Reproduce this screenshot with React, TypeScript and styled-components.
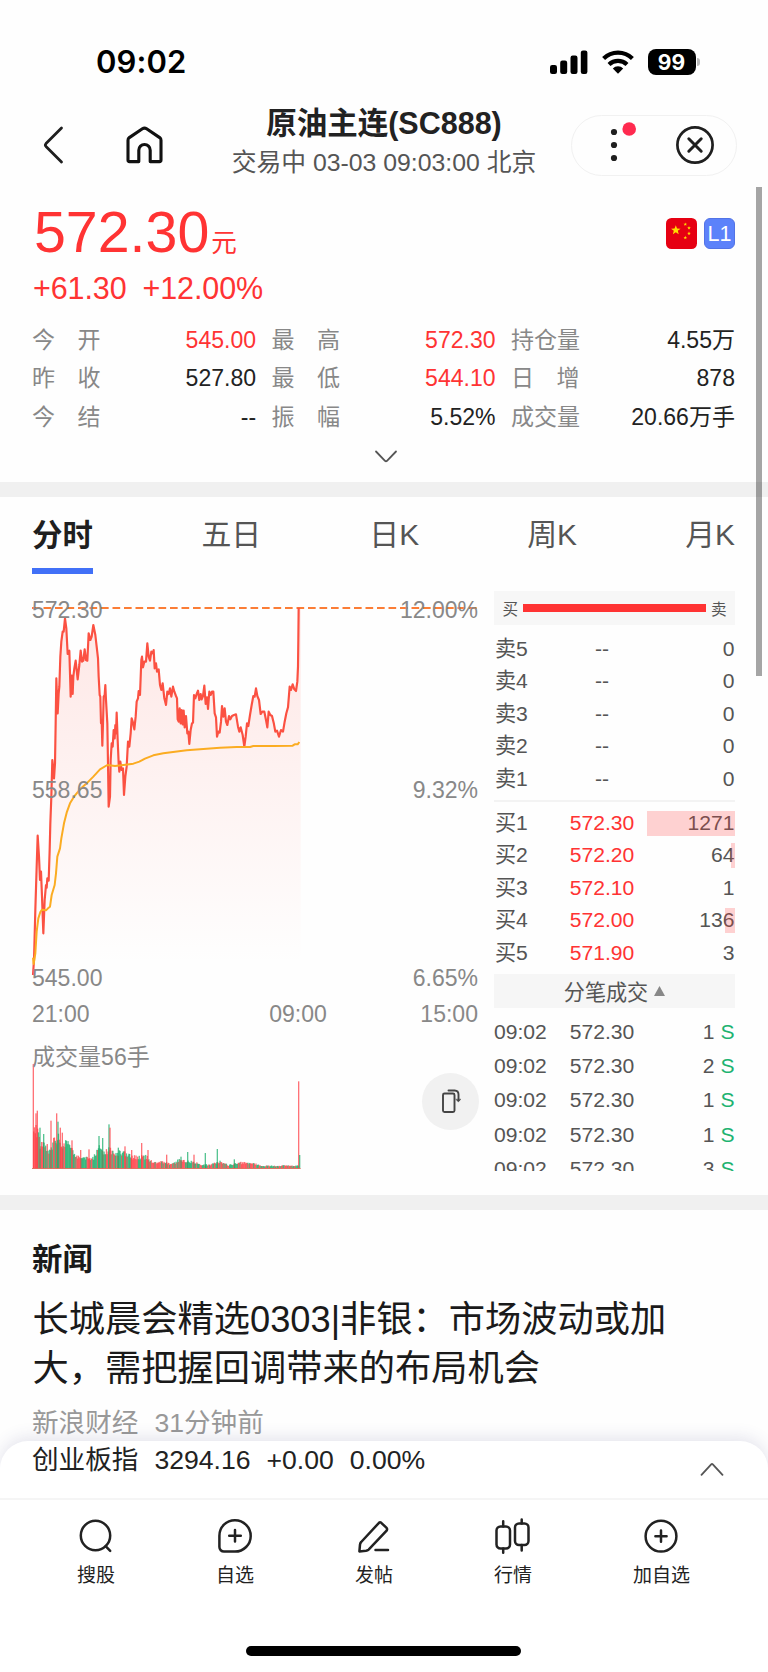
import React from "react";
import styled, { createGlobalStyle } from "styled-components";

const GlobalStyle = createGlobalStyle`
  * { box-sizing: border-box; }
  body {
    margin: 0;
    background: #fff;
    font-family: "Liberation Sans", "Noto Sans CJK SC", sans-serif;
    color: #222;
  }
  svg { display: block; }
`;

const RED = "#ff3333";
const GREEN = "#1db371";

const Screen = styled.div`
  position: relative;
  display: flex;
  flex-direction: column;
  width: 768px;
  height: 1672px;
  overflow: hidden;
  background: #fefefe;
`;

/* ---------- status bar ---------- */
const StatusBar = styled.div`
  flex: none;
  display: flex;
  justify-content: space-between;
  align-items: center;
  height: 102px;
  padding: 22px 68px 0 96px;
`;
const Clock = styled.div`
  font: 600 31px/40px Inter, sans-serif;
  color: #000;
  letter-spacing: 0.1px;
`;
const StatusIcons = styled.div`
  display: flex;
  align-items: center;
`;
const Battery = styled.div`
  width: 48px;
  height: 26.5px;
  margin-left: 14px;
  border-radius: 8px;
  background: #000;
  color: #fff;
  font: 700 21px/27px Inter, sans-serif;
  text-align: center;
`;
const BatteryNub = styled.div`
  width: 3px;
  height: 8px;
  margin-left: 1.5px;
  border-radius: 0 3px 3px 0;
  background: #b9b9b9;
`;

/* ---------- header ---------- */
const Header = styled.header`
  flex: none;
  display: grid;
  grid-template-columns: 1fr auto 1fr;
  align-items: center;
  height: 86px;
`;
const HeaderLeft = styled.div`
  display: flex;
  align-items: center;
  gap: 62px;
  padding-left: 42px;
`;
const TitleBlock = styled.div`
  text-align: center;
  margin-top: -5px;
`;
const Title = styled.h1`
  margin: 0;
  font-size: 30.5px;
  font-weight: 700;
  line-height: 40px;
`;
const Subtitle = styled.div`
  font-size: 24.8px;
  line-height: 39px;
  color: #555;
`;
const Capsule = styled.div`
  justify-self: end;
  display: flex;
  align-items: center;
  justify-content: space-between;
  width: 166px;
  height: 61px;
  margin-right: 31px;
  padding: 0 21px 0 37.5px;
  border: 1.5px solid #f1f1f1;
  border-radius: 31px;
`;

/* ---------- quote ---------- */
const Quote = styled.section`
  flex: none;
  height: 294px;
  padding: 12px 33px 0 32px;
`;
const PriceRow = styled.div`
  display: flex;
  justify-content: space-between;
  align-items: center;
  height: 66px;
`;
const Price = styled.div`
  padding: 9px 0 0 2px;
  font-size: 57.3px;
  line-height: 66px;
  color: ${RED};
`;
const Unit = styled.span`
  margin-left: 2px;
  font-size: 25.6px;
`;
const Badges = styled.div`
  display: flex;
  gap: 7px;
`;
const LevelBadge = styled.div`
  width: 31px;
  height: 31px;
  border: 1px solid #5273e6;
  border-radius: 6px;
  background: #5c82fa;
  color: #fff;
  font-size: 21.5px;
  line-height: 31px;
  text-align: center;
`;
const ChangeRow = styled.div`
  display: flex;
  gap: 16px;
  padding-left: 1px;
  font-size: 30.5px;
  line-height: 45px;
  letter-spacing: -0.1px;
  color: ${RED};
`;
const Stats = styled.div`
  display: grid;
  grid-template-columns: repeat(3, 1fr);
  column-gap: 15.4px;
  margin-top: 10px;
`;
const Stat = styled.div`
  display: flex;
  justify-content: space-between;
  font-size: 23.04px;
  line-height: 38.4px;
`;
const StatLabel = styled.span`
  display: flex;
  justify-content: space-between;
  width: 68.5px;
  color: #888;
`;
const StatValue = styled.span<{ $up?: boolean }>`
  color: ${(p) => (p.$up ? RED : "#222")};
`;
const ExpandRow = styled.div`
  display: flex;
  justify-content: center;
  padding: 14px 0 0 5px;
`;
const Band = styled.div`
  flex: none;
  height: 15px;
  background: #f0f0f0;
`;

/* ---------- tabs ---------- */
const Tabs = styled.nav`
  flex: none;
  display: flex;
  justify-content: space-between;
  height: 77px;
  padding: 4px 33px 0 32px;
`;
const Tab = styled.div<{ $active?: boolean }>`
  height: 73px;
  min-width: ${(p) => (p.$active ? "61.4px" : "0")};
  font-size: ${(p) => (p.$active ? 30.4 : 29.9)}px;
  line-height: 68px;
  font-weight: ${(p) => (p.$active ? 700 : 400)};
  color: ${(p) => (p.$active ? "#1f1f1f" : "#555")};
  border-bottom: 6px solid ${(p) => (p.$active ? "#4170f7" : "transparent")};
`;

/* ---------- chart + order book ---------- */
const Market = styled.section`
  flex: none;
  display: flex;
  justify-content: space-between;
  height: 621px;
  padding: 16px 33px 24px 32px;
`;
const ChartColumn = styled.div`
  width: 446px;
  font-size: 23.04px;
  line-height: 26px;
  color: #888;
`;
const PricePlot = styled.div`
  position: relative;
  height: 411px;
`;
const AxisLabel = styled.div<{ $top: number }>`
  position: absolute;
  left: 0;
  right: 0;
  top: ${(p) => p.$top}px;
  display: flex;
  justify-content: space-between;
`;
const TimeAxis = styled.div`
  display: flex;
  justify-content: space-between;
  height: 39px;
`;
const MiddleTime = styled.span`
  margin-left: 86px;
`;
const VolumePlot = styled.div`
  position: relative;
  height: 129px;
`;
const VolumeLabel = styled.div`
  position: absolute;
  top: 4px;
  left: 0;
`;
const RotateButton = styled.div`
  position: absolute;
  top: 33px;
  right: -1px;
  display: flex;
  align-items: center;
  justify-content: center;
  width: 57px;
  height: 57px;
  border-radius: 50%;
  background: #f1f1f1;
`;

const Book = styled.div`
  width: 241px;
  height: 580px;
  margin-top: 1px;
  overflow: hidden;
  font-size: 21.12px;
  color: #555;
`;
const RatioBar = styled.div`
  display: flex;
  align-items: center;
  gap: 4.5px;
  height: 34px;
  padding: 0 8.5px;
  margin-bottom: 7.5px;
  background: #f7f7f7;
  font-size: 15.6px;
`;
const RatioFill = styled.div`
  flex: 1;
  height: 8px;
  background: ${RED};
`;
const BookRow = styled.div`
  position: relative;
  display: grid;
  grid-template-columns: 70px 76px 1fr;
  line-height: 32.5px;
`;
const Level = styled.span`
  padding-left: 1px;
`;
const BookPrice = styled.span<{ $up?: boolean }>`
  text-align: center;
  color: ${(p) => (p.$up ? RED : "#555")};
`;
const Amount = styled.span`
  padding-right: 0.5px;
  text-align: right;
`;
const Depth = styled.div`
  position: absolute;
  right: 0;
  top: 4px;
  height: 25px;
  background: rgba(255, 60, 60, 0.23);
`;
const BookDivider = styled.div`
  height: 2px;
  margin: 4.5px 0 5px;
  background: #f3f3f3;
`;
const TradesHeader = styled.div`
  display: flex;
  align-items: center;
  justify-content: center;
  gap: 6px;
  height: 34px;
  margin: 4.5px 0 7px;
  background: #f6f6f6;
`;
const TradeRow = styled(BookRow)`
  line-height: 34.4px;
`;
const Side = styled.span`
  margin-left: 6px;
  color: ${GREEN};
`;

/* ---------- news ---------- */
const News = styled.section`
  flex: 1;
  min-height: 0;
  overflow: hidden;
  padding: 28px 33px 0 32px;
`;
const NewsHeading = styled.h2`
  margin: 0 0 14.5px;
  font-size: 30.4px;
  line-height: 42px;
  color: #1a1a1a;
`;
const Headline = styled.div`
  padding-left: 0.5px;
  font-size: 36.25px;
  line-height: 49.9px;
  color: #1a1a1a;
`;
const Meta = styled.div`
  display: flex;
  gap: 16px;
  margin-top: 9px;
  font-size: 26.6px;
  line-height: 40px;
  color: #999;
`;

/* ---------- bottom sheet ---------- */
const Sheet = styled.footer`
  position: relative;
  flex: none;
  height: 231px;
  border-radius: 28px 28px 0 0;
  background: #fff;
  box-shadow: 0 -4px 16px rgba(60, 60, 120, 0.13);
`;
const IndexRow = styled.div`
  display: flex;
  justify-content: space-between;
  height: 59px;
  padding: 0 44px 0 32px;
  border-bottom: 2px solid #f5f5f5;
`;
const IndexText = styled.div`
  display: flex;
  gap: 16px;
  font-size: 26.6px;
  line-height: 39px;
`;
const Actions = styled.div`
  display: flex;
  justify-content: space-between;
  padding: 18px 78px 0 77px;
`;
const Action = styled.div`
  display: flex;
  flex-direction: column;
  align-items: center;
  gap: 8px;
  font-size: 19px;
  line-height: 28px;
`;
const HomeIndicator = styled.div`
  width: 275px;
  height: 10px;
  margin: 56px 0 0 246px;
  border-radius: 5px;
  background: #000;
`;
const Scrollbar = styled.div`
  position: absolute;
  top: 187px;
  left: 756px;
  width: 6px;
  height: 489px;
  background: rgba(0, 0, 0, 0.35);
`;

/* ---------- data ---------- */
const STATS: [string, string, boolean?][] = [
  ["今开", "545.00", true],
  ["最高", "572.30", true],
  ["持仓量", "4.55万"],
  ["昨收", "527.80"],
  ["最低", "544.10", true],
  ["日增", "878"],
  ["今结", "--"],
  ["振幅", "5.52%"],
  ["成交量", "20.66万手"],
];
const BUYS: [string, string, string, number][] = [
  ["买1", "572.30", "1271", 88],
  ["买2", "572.20", "64", 4.5],
  ["买3", "572.10", "1", 0],
  ["买4", "572.00", "136", 10],
  ["买5", "571.90", "3", 0],
];
const TRADES = ["1", "2", "1", "1", "3"];

const PRICE_LINE =
  "39,1155 42,1110 46,960 50,830 53,737 57,800 60,870 63,845 66,920 70,1030 74,930 78,885 80,893 82,865 86,872 89,780 91,700 94,620 97,510 100,540 102,565 105,520 107,400 109,265 111,320 113,370 116,310 118,290 121,200 124,155 128,125 131,125 135,85 139,115 143,192 148,182 150,250 152,320 155,257 158,312 160,260 163,235 167,212 173,268 178,225 182,182 186,215 190,212 194,178 198,210 202,212 206,130 211,150 215,140 220,105 226,135 230,170 234,205 236,260 239,315 241,320 243,400 245,390 247,467 249,400 251,320 254,315 256,285 258,330 262,400 264,520 266,650 270,620 272,510 275,460 278,470 281,420 284,445 286,405 288,430 290,368 293,450 296,520 298,545 301,515 305,540 309,535 312,615 316,560 320,530 324,455 328,470 332,430 335,385 339,398 343,418 347,380 350,335 354,325 356,303 360,315 364,210 366,200 369,232 373,215 378,215 382,160 386,200 390,212 394,185 398,190 401,180 404,235 408,220 411,245 416,238 420,285 424,300 428,280 433,325 438,345 442,305 446,312 450,295 454,320 459,290 463,305 468,318 471,325 473,388 476,395 479,355 482,400 485,360 488,403 491,362 494,412 498,378 502,430 505,425 508,462 512,420 516,400 519,398 522,315 526,325 530,312 534,302 538,330 542,312 545,328 549,318 553,287 557,342 561,322 564,357 568,305 572,315 576,305 580,305 584,370 588,382 591,440 595,425 599,428 603,395 606,348 610,380 614,355 618,395 622,405 627,378 631,388 636,378 642,375 648,373 654,410 658,425 662,412 668,435 673,470 677,440 681,400 685,408 690,375 695,345 700,318 704,320 708,295 712,318 717,330 722,372 727,365 733,365 738,390 742,412 746,365 751,375 756,378 761,398 766,425 771,422 777,440 783,420 789,425 794,395 799,370 804,352 809,290 813,300 818,283 823,298 828,303 832,275 834,230 835,150 836,53";
const AVERAGE_LINE =
  "39,1103 41,1122 46,1090 50,1025 55,985 61,966 66,959 78,961 84,955 90,950 95,915 104,885 108,850 112,800 120,775 124,745 132,700 140,668 150,640 162,620 180,598 200,580 220,560 240,538 262,525 285,528 310,525 340,521 358,515 375,506 400,496 430,490 465,485 500,481 540,478 600,473 650,471 690,471 700,468 760,468 818,467 824,463 833,463 838,456";

const BASE = 415;
// x position and typical bar height at that position
const ENVELOPE: [number, number][] = [
  [38, 110], [50, 130], [62, 75], [72, 85], [88, 60], [100, 85], [114, 100],
  [130, 80], [150, 72], [165, 38], [180, 42], [200, 32], [222, 36], [240, 70],
  [252, 50], [266, 62], [285, 50], [310, 50], [335, 36], [360, 36], [378, 38],
  [400, 18], [430, 21], [455, 12], [480, 30], [500, 22], [520, 22], [540, 12],
  [570, 11], [600, 22], [625, 10], [660, 18], [700, 16], [725, 8], [760, 8],
  [800, 9], [825, 8], [836, 10],
];
const SPIKES: { x: number; h: number; up: boolean }[] = [
  { x: 40, h: 313, up: true }, { x: 48, h: 165, up: true },
  { x: 52, h: 173, up: true }, { x: 60, h: 122, up: false },
  { x: 71, h: 103, up: false }, { x: 93, h: 143, up: true },
  { x: 110, h: 165, up: true }, { x: 114, h: 140, up: false },
  { x: 121, h: 122, up: true }, { x: 127, h: 107, up: true },
  { x: 156, h: 84, up: true }, { x: 182, h: 55, up: true },
  { x: 207, h: 57, up: true }, { x: 237, h: 97, up: false },
  { x: 248, h: 91, up: false }, { x: 267, h: 132, up: false },
  { x: 270, h: 122, up: true }, { x: 295, h: 62, up: false },
  { x: 315, h: 66, up: true }, { x: 335, h: 55, up: true },
  { x: 365, h: 76, up: true }, { x: 384, h: 55, up: true },
  { x: 440, h: 41, up: true }, { x: 483, h: 35, up: false },
  { x: 503, h: 49, up: false }, { x: 522, h: 41, up: true },
  { x: 556, h: 46, up: false }, { x: 592, h: 58, up: false },
  { x: 643, h: 27, up: false }, { x: 836, h: 261, up: true },
  { x: 839, h: 40, up: false },
];

function envelopeAt(x: number) {
  for (let i = 1; i < ENVELOPE.length; i++) {
    const [x1, h1] = ENVELOPE[i];
    const [x0, h0] = ENVELOPE[i - 1];
    if (x <= x1) return h0 + ((h1 - h0) * (x - x0)) / (x1 - x0);
  }
  return 6;
}

function volumeBars() {
  const bars: { x: number; h: number; up: boolean }[] = [];
  let seed = 11;
  for (let x = 41; x < 836; x += 2.4) {
    seed = (seed * 1103515245 + 12345) % 2147483648;
    const r = (seed >> 8) / 8388608;
    seed = (seed * 1103515245 + 12345) % 2147483648;
    const c = (seed >> 8) / 8388608;
    const mostlyGreen = (x > 136 && x < 158) || (x > 218 && x < 245);
    const mostlyRed = x < 56 || (x > 655 && x < 705);
    const up = mostlyGreen ? c > 0.85 : mostlyRed ? c > 0.2 : c > 0.5;
    bars.push({ x, h: Math.max(4, envelopeAt(x) * (0.7 + 0.4 * r)), up });
  }
  return bars.concat(SPIKES);
}
const BARS = volumeBars();

/* ---------- drawings ---------- */
const stroke = { fill: "none", strokeLinecap: "round", strokeLinejoin: "round" } as const;

const WifiIcon = styled.svg`
  margin-left: 14px;
`;
const Collapse = styled.svg`
  margin-top: 21px;
`;

const Signal = () => (
  <svg width="38" height="24" viewBox="0 0 38 24">
    <rect x="0" y="15" width="7" height="9" rx="2.2" />
    <rect x="10.2" y="10.5" width="7" height="13.5" rx="2.2" />
    <rect x="20.5" y="5.5" width="7" height="18.5" rx="2.2" />
    <rect x="30.8" y="0.5" width="6.6" height="23.5" rx="2.2" />
  </svg>
);
const Wifi = () => (
  <WifiIcon width="32" height="24" viewBox="0 0 32 24">
    <g fill="none" stroke="#000" strokeWidth="4.2">
      <path d="M1.6 8.6A20.5 20.5 0 0 1 30.4 8.6" />
      <path d="M7 14.4A13 13 0 0 1 25 14.4" />
    </g>
    <path d="M10.8 18.4a7.4 7.4 0 0 1 10.4 0L16 23.8z" />
  </WifiIcon>
);
const Star = ({ x, y, r }: { x: number; y: number; r: number }) => {
  const pts = Array.from({ length: 10 }, (_, i) => {
    const a = (Math.PI * i) / 5 - Math.PI / 2;
    const d = i % 2 ? r * 0.42 : r;
    return `${x + d * Math.cos(a)},${y + d * Math.sin(a)}`;
  });
  return <polygon points={pts.join(" ")} fill="#ffde00" />;
};
const Flag = () => (
  <svg width="31" height="31" viewBox="0 0 31 31">
    <rect width="31" height="31" rx="5.5" fill="#e60012" />
    <Star x={9.8} y={12.2} r={5} />
    <Star x={19.3} y={6.3} r={1.9} />
    <Star x={23} y={10} r={1.9} />
    <Star x={23} y={15.5} r={1.9} />
    <Star x={19.3} y={19.6} r={1.9} />
  </svg>
);

const tools: { label: string; icon: React.ReactNode }[] = [
  {
    label: "搜股",
    icon: (
      <>
        <circle cx="17.5" cy="17.5" r="14.7" />
        <path d="M27.6 28.2l4.600 4.600" />
      </>
    ),
  },
  {
    label: "自选",
    icon: (
      <>
        <path d="M18 2.2a15.4 15.4 0 0 1 0 31.4H7a4.6 4.6 0 0 1-4.6-4.6V17.8A15.5 15.5 0 0 1 18 2.2z" />
        <path d="M18 12v11.6M12.2 17.8h11.6" />
      </>
    ),
  },
  {
    label: "发帖",
    icon: (
      <>
        <path d="M25 4.6l5.6 5.3q1 1.4 0 2.8L12.6 31.6q-1 1-2.6 1.2l-6.6.6.6-6.8q.2-1.6 1.2-2.6L23 4.8q1-.9 2-.2z" />
        <path d="M19.500 32h12.500" />
      </>
    ),
  },
  {
    label: "行情",
    icon: (
      <>
        <rect x="1.500" y="8.500" width="13.500" height="22" rx="4" />
        <rect x="20" y="5.500" width="13.500" height="21.500" rx="4" />
        <path d="M8.200 3.200v5.300M8.200 30.500v4.300M26.700 1.600v3.900M26.700 27v5.600" />
      </>
    ),
  },
  {
    label: "加自选",
    icon: (
      <>
        <circle cx="18" cy="18.200" r="15.400" />
        <path d="M18 12.600v11.200M12.400 18.200h11.200" />
      </>
    ),
  },
];

export default function App() {
  return (
    <Screen>
      <GlobalStyle />
      <StatusBar>
        <Clock>09:02</Clock>
        <StatusIcons>
          <Signal />
          <Wifi />
          <Battery>99</Battery>
          <BatteryNub />
        </StatusIcons>
      </StatusBar>

      <Header>
        <HeaderLeft>
          <svg width="22" height="40" viewBox="0 0 22 40" {...stroke} stroke="#1f1f1f" strokeWidth="2.8">
            <path d="M19.5 3L4 18.6q-1.3 1.4 0 2.8L19.5 37" />
          </svg>
          <svg width="37" height="38" viewBox="0 0 37 38" {...stroke} stroke="#111" strokeWidth="3.1">
            <path d="M2 14.2q0-1.6 1.3-2.6L16.4 2.8q2.1-1.4 4.2 0l13.1 8.8q1.3 1 1.3 2.6V34q0 1.6-1.6 1.6h-9.2V24.2a5.7 5.7 0 0 0-11.4 0v11.4H3.6Q2 35.6 2 34z" />
          </svg>
        </HeaderLeft>
        <TitleBlock>
          <Title>原油主连(SC888)</Title>
          <Subtitle>交易中 03-03 09:03:00 北京</Subtitle>
        </TitleBlock>
        <Capsule>
          <svg width="28" height="46" viewBox="0 0 28 46">
            <g fill="#1f1f1f">
              <circle cx="4" cy="10" r="3.1" />
              <circle cx="4" cy="23" r="3.1" />
              <circle cx="4" cy="36" r="3.1" />
            </g>
            <circle cx="19.2" cy="7" r="6.8" fill="#ff2a4f" />
          </svg>
          <svg width="40" height="40" viewBox="0 0 40 40" {...stroke} stroke="#1f1f1f" strokeWidth="3">
            <circle cx="20" cy="20" r="17.6" strokeWidth="2.7" />
            <path d="M13.8 13.8l12.4 12.4M26.2 13.8L13.8 26.2" />
          </svg>
        </Capsule>
      </Header>

      <Quote>
        <PriceRow>
          <Price>
            572.30<Unit>元</Unit>
          </Price>
          <Badges>
            <Flag />
            <LevelBadge>L1</LevelBadge>
          </Badges>
        </PriceRow>
        <ChangeRow>
          <span>+61.30</span>
          <span>+12.00%</span>
        </ChangeRow>
        <Stats>
          {STATS.map(([label, value, up]) => (
            <Stat key={label}>
              <StatLabel>
                {label.split("").map((c) => (
                  <span key={c}>{c}</span>
                ))}
              </StatLabel>
              <StatValue $up={up}>{value}</StatValue>
            </Stat>
          ))}
        </Stats>
        <ExpandRow>
          <svg width="24" height="14" viewBox="0 0 24 14" {...stroke} stroke="#555" strokeWidth="1.8">
            <path d="M2 1.5l9 9.3q1 1 2 0l9-9.3" />
          </svg>
        </ExpandRow>
      </Quote>

      <Band />

      <Tabs>
        {["分时", "五日", "日K", "周K", "月K"].map((t, i) => (
          <Tab key={t} $active={i === 0}>
            {t}
          </Tab>
        ))}
      </Tabs>

      <Market>
        <ChartColumn>
          <PricePlot>
            <svg width="446" height="395" viewBox="36 0 1338 1185" overflow="visible">
              <defs>
                <linearGradient id="area" x1="0" y1="50" x2="0" y2="1122" gradientUnits="userSpaceOnUse">
                  <stop offset="0" stopColor="#ff4a3d" stopOpacity="0.13" />
                  <stop offset="1" stopColor="#ff4a3d" stopOpacity="0" />
                </linearGradient>
              </defs>
              <polygon points={`${PRICE_LINE} 842,53 842,1122 39,1122`} fill="url(#area)" />
              <path d="M36 54H1374" stroke="#fb7d36" strokeWidth="6" strokeDasharray="23 11.5" fill="none" />
              <polyline points={PRICE_LINE} fill="none" stroke="#fb5142" strokeWidth="6.5" strokeLinejoin="round" />
              <polyline points={AVERAGE_LINE} fill="none" stroke="#fbac22" strokeWidth="6" strokeLinejoin="round" />
            </svg>
            <AxisLabel $top={7}>
              <span>572.30</span>
              <span>12.00%</span>
            </AxisLabel>
            <AxisLabel $top={187}>
              <span>558.65</span>
              <span>9.32%</span>
            </AxisLabel>
            <AxisLabel $top={375}>
              <span>545.00</span>
              <span>6.65%</span>
            </AxisLabel>
          </PricePlot>
          <TimeAxis>
            <span>21:00</span>
            <MiddleTime>09:00</MiddleTime>
            <span>15:00</span>
          </TimeAxis>
          <VolumePlot>
            <svg width="446" height="129" viewBox="36 30 1338 387">
              {BARS.map((b, i) => (
                <rect
                  key={i}
                  x={b.x - 2}
                  y={BASE - b.h}
                  width="4"
                  height={b.h}
                  fill={b.up ? "#ff3b42" : "#15ad68"}
                  opacity="0.72"
                />
              ))}
              <path d="M36 415.5H842" stroke="#e0604f" strokeWidth="2.5" />
            </svg>
            <VolumeLabel>成交量56手</VolumeLabel>
            <RotateButton>
              <svg width="22" height="26" viewBox="0 0 22 26" {...stroke} stroke="#444" strokeWidth="1.9">
                <rect x="3" y="4.5" width="11.5" height="18.5" rx="1.5" />
                <path d="M8.5 1.5h6.2q3.8.2 3.8 4v6" />
                <path d="M15.9 10.5l2.4 2.3 2.4-2.3z" fill="#444" strokeWidth="0.5" />
              </svg>
            </RotateButton>
          </VolumePlot>
        </ChartColumn>

        <Book>
          <RatioBar>
            <span>买</span>
            <RatioFill />
            <span>卖</span>
          </RatioBar>
          {[5, 4, 3, 2, 1].map((n) => (
            <BookRow key={n}>
              <Level>卖{n}</Level>
              <BookPrice>--</BookPrice>
              <Amount>0</Amount>
            </BookRow>
          ))}
          <BookDivider />
          {BUYS.map(([level, price, amount, depth]) => (
            <BookRow key={level}>
              <Level>{level}</Level>
              <BookPrice $up>{price}</BookPrice>
              <Amount>{amount}</Amount>
              <Depth style={{ width: depth }} />
            </BookRow>
          ))}
          <TradesHeader>
            <span>分笔成交</span>
            <svg width="11" height="10" viewBox="0 0 11 10">
              <path d="M5.5 0L11 10H0z" fill="#888" />
            </svg>
          </TradesHeader>
          {TRADES.map((qty, i) => (
            <TradeRow key={i}>
              <span>09:02</span>
              <BookPrice>572.30</BookPrice>
              <Amount>
                {qty}
                <Side>S</Side>
              </Amount>
            </TradeRow>
          ))}
        </Book>
      </Market>

      <Band />

      <News>
        <NewsHeading>新闻</NewsHeading>
        <Headline>
          长城晨会精选0303|非银：市场波动或加
          <br />
          大，需把握回调带来的布局机会
        </Headline>
        <Meta>
          <span>新浪财经</span>
          <span>31分钟前</span>
        </Meta>
      </News>

      <Sheet>
        <IndexRow>
          <IndexText>
            <span>创业板指</span>
            <span>3294.16</span>
            <span>+0.00</span>
            <span>0.00%</span>
          </IndexText>
          <Collapse width="24" height="14" viewBox="0 0 24 14" {...stroke} stroke="#555" strokeWidth="1.8">
            <path d="M1.5 12.8L11.2 2.3q.8-.8 1.6 0l9.7 10.5" />
          </Collapse>
        </IndexRow>
        <Actions>
          {tools.map((t) => (
            <Action key={t.label}>
              <svg width="36" height="36" viewBox="0 0 36 36" {...stroke} stroke="#222" strokeWidth="2.5">
                {t.icon}
              </svg>
              <span>{t.label}</span>
            </Action>
          ))}
        </Actions>
        <HomeIndicator />
      </Sheet>

      <Scrollbar />
    </Screen>
  );
}
